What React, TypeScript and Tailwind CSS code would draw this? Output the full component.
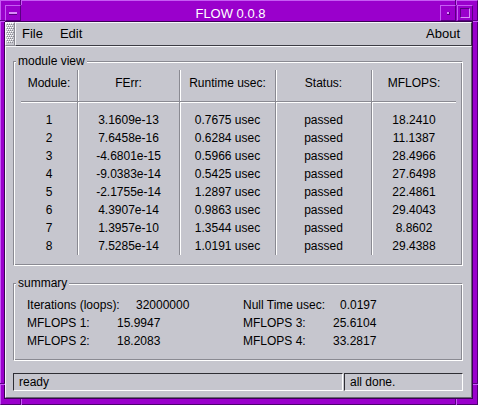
import React from "react";

const rows: string[][] = [
  ["1", "3.1609e-13", "0.7675 usec", "passed", "18.2410"],
  ["2", "7.6458e-16", "0.6284 usec", "passed", "11.1387"],
  ["3", "-4.6801e-15", "0.5966 usec", "passed", "28.4966"],
  ["4", "-9.0383e-14", "0.5425 usec", "passed", "27.6498"],
  ["5", "-2.1755e-14", "1.2897 usec", "passed", "22.4861"],
  ["6", "4.3907e-14", "0.9863 usec", "passed", "29.4043"],
  ["7", "1.3957e-10", "1.3544 usec", "passed", "8.8602"],
  ["8", "7.5285e-14", "1.0191 usec", "passed", "29.4388"],
];

const cols = [
  { head: "Module:", cls: "w-[57px] border-r border-r-[#8a8a92] shadow-[1px_0_0_#ffffff]" },
  { head: "FErr:", cls: "w-[102px] border-r border-r-[#8a8a92] shadow-[1px_0_0_#ffffff]" },
  { head: "Runtime usec:", cls: "w-[96px] border-r border-r-[#8a8a92] shadow-[1px_0_0_#ffffff]" },
  { head: "Status:", cls: "w-[96px] border-r border-r-[#8a8a92] shadow-[1px_0_0_#ffffff]" },
  { head: "MFLOPS:", cls: "w-[84px]" },
];

function Mark({ cls }: { cls: string }) {
  return <div className={"absolute " + cls} />;
}

function Pair({ label, value, lw }: { label: string; value: string; lw: string }) {
  return (
    <div className="flex h-[18px] leading-[18px]">
      <span className={lw}>{label}</span>
      <span>{value}</span>
    </div>
  );
}

function Grip() {
  const dots: React.ReactElement[] = [];
  for (let y = 1; y < 21; y += 2) {
    const off = (y >> 1) % 2 === 0 ? 1 : 2;
    for (let x = off; x < 8; x += 2) {
      dots.push(<rect key={`d${x}-${y}`} x={x} y={y} width="1" height="1" fill="#8a8a92" />);
      dots.push(<rect key={`l${x}-${y}`} x={x - 1} y={y - 1} width="1" height="1" fill="#ffffff" />);
    }
  }
  return (
    <svg width="8" height="22" viewBox="0 0 8 22">
      {dots}
    </svg>
  );
}

export default function App() {
  return (
    <div className="relative w-[478px] h-[405px] bg-[#9a00cc] border border-t-[#c65cf4] border-l-[#c65cf4] border-r-[#4e0070] border-b-[#4e0070] pt-[3px] pl-[3px] pr-[4px] pb-[5px] flex flex-col font-['Liberation_Sans',Arial,sans-serif] text-black">
      {/* resize-corner grooves */}
      <Mark cls="left-[19px] -top-[1px] w-[2px] h-[5px] border-l border-l-[#5a0082] border-r border-r-[#c65cf4]" />
      <Mark cls="left-[454px] -top-[1px] w-[2px] h-[5px] border-l border-l-[#5a0082] border-r border-r-[#c65cf4]" />
      <Mark cls="left-[19px] -bottom-[1px] w-[2px] h-[6px] border-l border-l-[#5a0082] border-r border-r-[#c65cf4]" />
      <Mark cls="left-[454px] -bottom-[1px] w-[2px] h-[6px] border-l border-l-[#5a0082] border-r border-r-[#c65cf4]" />
      <Mark cls="-left-[1px] top-[19px] w-[5px] h-[2px] border-t border-t-[#5a0082] border-b border-b-[#c65cf4]" />
      <Mark cls="-right-[1px] top-[19px] w-[5px] h-[2px] border-t border-t-[#5a0082] border-b border-b-[#c65cf4]" />
      <Mark cls="-left-[1px] top-[382px] w-[5px] h-[2px] border-t border-t-[#5a0082] border-b border-b-[#c65cf4]" />
      <Mark cls="-right-[1px] top-[382px] w-[5px] h-[2px] border-t border-t-[#5a0082] border-b border-b-[#c65cf4]" />

      {/* title bar */}
      <div className="h-[17px] flex items-start shrink-0">
        <div className="ml-[1px] mt-[1px] w-[16px] h-[16px] border border-t-[#c65cf4] border-l-[#c65cf4] border-r-[#5a0082] border-b-[#5a0082] flex items-center justify-center">
          <div className="w-[8px] h-[3px] bg-[#d98cf8] border-b border-b-[#5a0082]" />
        </div>
        <div className="flex-1 text-center text-white text-[13px] leading-[17px] pt-[1px]">FLOW 0.0.8</div>
        <div className="mt-[1px] w-[16px] h-[16px] border border-t-[#c65cf4] border-l-[#c65cf4] border-r-[#5a0082] border-b-[#5a0082] flex items-center justify-center">
          <div className="w-[3px] h-[3px] bg-[#d98cf8] border-r border-b border-r-[#5a0082] border-b-[#5a0082]" />
        </div>
        <div className="ml-[1px] mt-[1px] w-[16px] h-[16px] border border-t-[#c65cf4] border-l-[#c65cf4] border-r-[#5a0082] border-b-[#5a0082] flex items-center justify-center">
          <div className="w-[10px] h-[10px] border border-t-[#5a0082] border-l-[#5a0082] border-r-[#d98cf8] border-b-[#d98cf8]" />
        </div>
      </div>

      {/* client area */}
      <div className="flex-1 flex flex-col border border-[#3c0056] bg-[#c6c6ce] text-[12px]">
        {/* menubar */}
        <div className="h-[24px] flex shrink-0">
          <div className="w-[10px] border border-t-[#f6f6fa] border-l-[#f6f6fa] border-r-[#8a8a92] border-b-[#8a8a92] flex items-center justify-center">
            <Grip />
          </div>
          <div className="flex-1 flex items-center border border-t-[#f6f6fa] border-l-[#f6f6fa] border-r-[#3c3c44] border-b-[#3c3c44] text-[13px] pl-[6px] pr-[11px]">
            <span>File</span>
            <span className="ml-[17px]">Edit</span>
            <span className="ml-auto">About</span>
          </div>
        </div>

        {/* body */}
        <div className="flex-1 flex flex-col border border-t-[#f6f6fa] border-l-[#f6f6fa] border-r-[#6a6a72] border-b-[#6a6a72] pl-[7px] pr-[8px]">
          {/* module view */}
          <div className="relative mt-[14px] border border-t-[#8a8a92] border-l-[#8a8a92] border-r-white border-b-white shadow-[inset_1px_1px_0_#ffffff,inset_-1px_-1px_0_#8a8a92] pt-[8px] pl-[7px] pb-[10px]">
            <span className="absolute -top-[8px] left-[2px] px-[2px] bg-[#c6c6ce] leading-[14px]">module view</span>
            <div className="flex">
              {cols.map((c, ci) => (
                <div key={c.head} className={"flex flex-col " + c.cls}>
                  <div className="h-[31px] pt-[6px] leading-[14px] text-center">{c.head}</div>
                  <div className="h-[2px] border-t border-t-[#8a8a92] border-b border-b-white" />
                  <div className="mt-[8px] flex flex-col">
                    {rows.map((r) => (
                      <div key={r[0]} className="h-[18px] leading-[18px] text-center whitespace-nowrap">
                        {r[ci]}
                      </div>
                    ))}
                  </div>
                </div>
              ))}
            </div>
          </div>

          {/* summary */}
          <div className="relative mt-[17px] border border-t-[#8a8a92] border-l-[#8a8a92] border-r-white border-b-white shadow-[inset_1px_1px_0_#ffffff,inset_-1px_-1px_0_#8a8a92] pt-[12px] pl-[13px] pb-[10px]">
            <span className="absolute -top-[8px] left-[2px] px-[2px] bg-[#c6c6ce] leading-[14px]">summary</span>
            <div className="grid grid-cols-[216px_auto]">
              <Pair label="Iterations (loops):" value="32000000" lw="w-[109px]" />
              <Pair label="Null Time usec:" value="0.0197" lw="w-[97px]" />
              <Pair label="MFLOPS 1:" value="15.9947" lw="w-[90px]" />
              <Pair label="MFLOPS 3:" value="25.6104" lw="w-[90px]" />
              <Pair label="MFLOPS 2:" value="18.2083" lw="w-[90px]" />
              <Pair label="MFLOPS 4:" value="33.2817" lw="w-[90px]" />
            </div>
          </div>

          {/* status bar */}
          <div className="mt-[12px] h-[18px] flex gap-[1px]">
            <div className="w-[330px] border border-t-[#2e2e34] border-l-[#2e2e34] border-r-white border-b-white pl-[5px] leading-[16px]">ready</div>
            <div className="flex-1 border border-t-[#2e2e34] border-l-[#2e2e34] border-r-white border-b-white pl-[5px] leading-[16px]">all done.</div>
          </div>
        </div>
      </div>
    </div>
  );
}
